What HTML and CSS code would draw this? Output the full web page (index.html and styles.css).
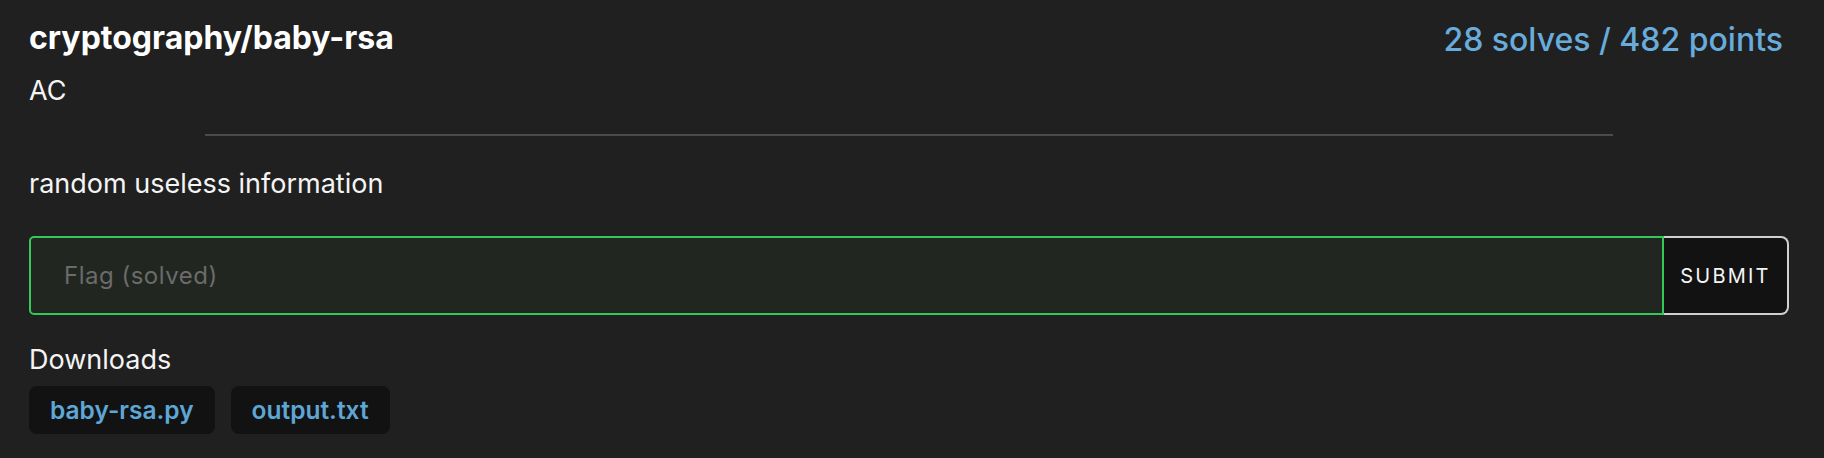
FILE: index.html
```html
<!DOCTYPE html>
<html lang="en">
<head>
<meta charset="utf-8">
<title>cryptography/baby-rsa</title>
<link rel="stylesheet" href="styles.css">
</head>
<body>
<div class="challenge">
  <div class="header">
    <h2 class="title">cryptography/baby-rsa</h2>
    <span class="stats">28 solves / 482 points</span>
  </div>
  <div class="author">AC</div>
  <hr class="divider">
  <p class="desc">random useless information</p>
  <form class="flag-form">
    <input class="flag-input" type="text" placeholder="Flag (solved)">
    <button class="submit" type="button">SUBMIT</button>
  </form>
  <div class="downloads-label">Downloads</div>
  <div class="downloads">
    <a class="file" href="#">baby-rsa.py</a>
    <a class="file" href="#">output.txt</a>
  </div>
</div>
</body>
</html>
```
FILE: styles.css
```css
html, body {
  margin: 0;
  padding: 0;
  background: #202020;
}
body {
  font-family: Inter, "Noto Sans", "Liberation Sans", sans-serif;
  color: #f4f4f4;
}
.challenge {
  padding: 17.5px 35px 0 29px;
}
.header {
  display: flex;
  justify-content: space-between;
  align-items: flex-start;
}
.title {
  margin: 0;
  font-size: 32px;
  line-height: 40px;
  font-weight: 700;
  color: #ffffff;
}
.stats {
  margin-top: 4.5px;
  margin-right: 6px;
  font-size: 32px;
  line-height: 36px;
  font-weight: 450;
  color: #68acdc;
}
.author {
  margin-top: 16.5px;
  font-size: 27px;
  line-height: 32px;
}
.divider {
  width: 80%;
  margin: 27.5px auto 0;
  border: 0;
  height: 2px;
  background: #4b4b4b;
}
.desc {
  margin: 32px 0 0;
  font-size: 27px;
  line-height: 32px;
}
.flag-form {
  display: flex;
  margin-top: 36px;
  height: 79px;
}
.flag-input {
  flex: 1;
  box-sizing: border-box;
  height: 100%;
  margin: 0;
  padding: 0 0 0 33px;
  border: 2px solid #34c759;
  border-radius: 5px 0 0 5px;
  background: #212620;
  color: #f4f4f4;
  font-family: inherit;
  font-size: 24px;
  letter-spacing: 0.5px;
  outline: none;
}
.flag-input::placeholder {
  color: #6b6b6b;
}
.submit {
  box-sizing: border-box;
  width: 125px;
  height: 100%;
  margin: 0;
  padding: 0;
  border: 2px solid #d0d0d0;
  border-left: 0;
  border-radius: 0 8px 8px 0;
  background: #121212;
  color: #f4f4f4;
  font-family: inherit;
  font-size: 20px;
  letter-spacing: 2.2px;
}
.downloads-label {
  margin-top: 29px;
  font-size: 27px;
  line-height: 32px;
}
.downloads {
  display: flex;
  gap: 16px;
  margin-top: 10px;
}
.file {
  display: flex;
  align-items: center;
  height: 48px;
  padding: 0 21px;
  border-radius: 8px;
  background: #121212;
  color: #5ea6d6;
  font-size: 24.5px;
  font-weight: 600;
  text-decoration: none;
}
```
